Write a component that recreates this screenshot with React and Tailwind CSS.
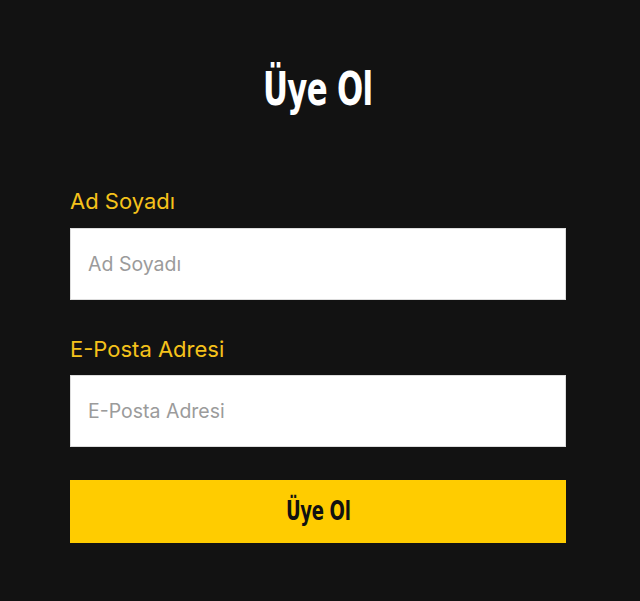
export default function App() {
  return (
    <div className="min-h-[601px] w-full bg-[#121212] pl-[70px]" style={{ fontFamily: "Inter, 'Liberation Sans', sans-serif" }}>
      <form className="w-[496px] pt-[64px] flex flex-col">
        <h1
          className="text-center text-white text-[46px] leading-[50px] font-bold"
          style={{ fontFamily: "'DejaVu Sans', sans-serif" }}
        >
          <span className="inline-block scale-x-[0.67] tracking-[-1px]">Üye Ol</span>
        </h1>
        <label className="mt-[74px] text-[#f5c21b] text-[22px] leading-[26px]">Ad Soyadı</label>
        <input
          type="text"
          placeholder="Ad Soyadı"
          className="mt-[14px] h-[72px] bg-white px-[17px] text-[19.5px] text-black placeholder:text-[#9b9b9b] outline-none border border-[#ddd]"
        />
        <label className="mt-[36px] text-[#f5c21b] text-[22px] leading-[26px]">E-Posta Adresi</label>
        <input
          type="email"
          placeholder="E-Posta Adresi"
          className="mt-[13px] h-[72px] bg-white px-[17px] text-[19.5px] text-black placeholder:text-[#9b9b9b] outline-none border border-[#ddd]"
        />
        <button
          type="button"
          className="mt-[33px] h-[63px] bg-[#ffcc00] text-[#111] text-[27px] font-bold"
          style={{ fontFamily: "'DejaVu Sans', sans-serif" }}
        >
          <span className="inline-block scale-x-[0.67] tracking-[-0.5px]">Üye Ol</span>
        </button>
      </form>
    </div>
  );
}
